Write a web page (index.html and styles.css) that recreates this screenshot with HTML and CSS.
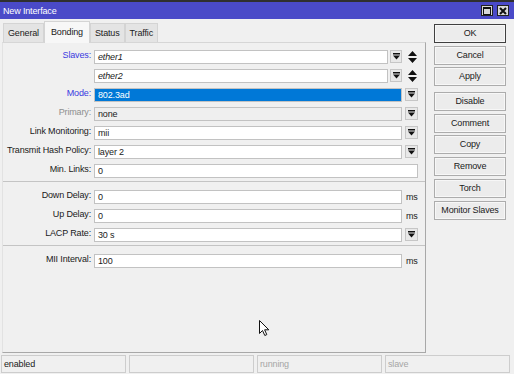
FILE: index.html
```html
<!DOCTYPE html>
<html lang="en">
<head>
<meta charset="UTF-8">
<meta name="viewport" content="width=device-width, initial-scale=1.0">
<link rel="stylesheet" href="styles.css">
<title>New Interface</title>
</head>
<body>

<div class="window">
  <div class="titlebar">
    <span class="title">New Interface</span>
    <div class="winbtns">
      <span class="winbtn">
        <svg width="8" height="8" viewBox="0 0 8 8"><rect x="0.5" y="0.5" width="7" height="7" fill="none" stroke="#111" stroke-width="1"/><rect x="0" y="0" width="8" height="2" fill="#111"/></svg>
      </span>
      <span class="winbtn">
        <svg width="8" height="8" viewBox="0 0 8 8"><path d="M1 1 L7 7 M7 1 L1 7" stroke="#111" stroke-width="2"/></svg>
      </span>
    </div>
  </div>

  <div class="content">
    <div class="main">
      <div class="tabs">
        <div class="tab">General</div>
        <div class="tab active">Bonding</div>
        <div class="tab">Status</div>
        <div class="tab">Traffic</div>
      </div>

      <div class="panel">
        <div class="row">
          <div class="label blue">Slaves:</div>
          <div class="field">
            <div class="input italic">ether1</div>
            <span class="drop narrow"><svg width="7" height="7" viewBox="0 0 7 7"><rect x="0" y="0" width="7" height="1.5" fill="#111"/><path d="M0 2.5 H7 L3.5 6.5 Z" fill="#111"/></svg></span>
            <span class="updown"><svg width="9" height="12" viewBox="0 0 9 12"><path d="M4.5 0 L9 5 H0 Z M0 7 H9 L4.5 12 Z" fill="#111"/></svg></span>
          </div>
        </div>
        <div class="row">
          <div class="label"></div>
          <div class="field">
            <div class="input italic">ether2</div>
            <span class="drop narrow"><svg width="7" height="7" viewBox="0 0 7 7"><rect x="0" y="0" width="7" height="1.5" fill="#111"/><path d="M0 2.5 H7 L3.5 6.5 Z" fill="#111"/></svg></span>
            <span class="updown"><svg width="9" height="12" viewBox="0 0 9 12"><path d="M4.5 0 L9 5 H0 Z M0 7 H9 L4.5 12 Z" fill="#111"/></svg></span>
          </div>
        </div>
        <div class="row">
          <div class="label blue">Mode:</div>
          <div class="field">
            <div class="input selected">802.3ad</div>
            <span class="drop"><svg width="7" height="7" viewBox="0 0 7 7"><rect x="0" y="0" width="7" height="1.5" fill="#111"/><path d="M0 2.5 H7 L3.5 6.5 Z" fill="#111"/></svg></span>
          </div>
        </div>
        <div class="row">
          <div class="label grey">Primary:</div>
          <div class="field">
            <div class="input disabled">none</div>
            <span class="drop"><svg width="7" height="7" viewBox="0 0 7 7"><rect x="0" y="0" width="7" height="1.5" fill="#111"/><path d="M0 2.5 H7 L3.5 6.5 Z" fill="#111"/></svg></span>
          </div>
        </div>
        <div class="row">
          <div class="label">Link Monitoring:</div>
          <div class="field">
            <div class="input">mii</div>
            <span class="drop"><svg width="7" height="7" viewBox="0 0 7 7"><rect x="0" y="0" width="7" height="1.5" fill="#111"/><path d="M0 2.5 H7 L3.5 6.5 Z" fill="#111"/></svg></span>
          </div>
        </div>
        <div class="row">
          <div class="label">Transmit Hash Policy:</div>
          <div class="field">
            <div class="input">layer 2</div>
            <span class="drop"><svg width="7" height="7" viewBox="0 0 7 7"><rect x="0" y="0" width="7" height="1.5" fill="#111"/><path d="M0 2.5 H7 L3.5 6.5 Z" fill="#111"/></svg></span>
          </div>
        </div>
        <div class="row">
          <div class="label">Min. Links:</div>
          <div class="field">
            <div class="input">0</div>
          </div>
        </div>

        <div class="separator"></div>

        <div class="row">
          <div class="label">Down Delay:</div>
          <div class="field">
            <div class="input">0</div>
            <span class="unit">ms</span>
          </div>
        </div>
        <div class="row">
          <div class="label">Up Delay:</div>
          <div class="field">
            <div class="input">0</div>
            <span class="unit">ms</span>
          </div>
        </div>
        <div class="row">
          <div class="label">LACP Rate:</div>
          <div class="field">
            <div class="input">30 s</div>
            <span class="drop"><svg width="7" height="7" viewBox="0 0 7 7"><rect x="0" y="0" width="7" height="1.5" fill="#111"/><path d="M0 2.5 H7 L3.5 6.5 Z" fill="#111"/></svg></span>
          </div>
        </div>

        <div class="separator"></div>

        <div class="row">
          <div class="label">MII Interval:</div>
          <div class="field">
            <div class="input">100</div>
            <span class="unit">ms</span>
          </div>
        </div>
      </div>
    </div>

    <div class="side">
      <div class="btn default">OK</div>
      <div class="btn">Cancel</div>
      <div class="btn">Apply</div>
      <div class="btn spaced">Disable</div>
      <div class="btn">Comment</div>
      <div class="btn">Copy</div>
      <div class="btn">Remove</div>
      <div class="btn">Torch</div>
      <div class="btn">Monitor Slaves</div>
    </div>
  </div>

  <div class="statusbar">
    <div class="status">enabled</div>
    <div class="status"></div>
    <div class="status dim">running</div>
    <div class="status dim">slave</div>
  </div>

  <svg class="cursor" width="11" height="17" viewBox="0 0 11 17">
    <path d="M0.5 0.5 V13.5 L3.5 10.5 L5.8 15.5 L7.8 14.6 L5.6 9.8 H9.8 Z" fill="#fff" stroke="#111" stroke-width="1"/>
  </svg>
</div>

</body>
</html>
```

FILE: styles.css
```css
body {
  margin: 0;
  background-color: #f0f0f0;
  font-family: "Liberation Sans", Arial, sans-serif;
  font-size: 9px;
  letter-spacing: -0.15px;
  color: #1a1a1a;
}
.window {
  position: relative;
  width: 514px;
  height: 374px;
  box-sizing: border-box;
  display: flex;
  flex-direction: column;
  background-color: #f0f0f0;
  border-top: 2px solid #2f2f2f;
}
.titlebar {
  height: 17px;
  display: flex;
  align-items: center;
  justify-content: space-between;
  padding: 0 5px 0 3px;
  background-color: #4a4ac8;
  color: #fff;
}
.winbtns {
  display: flex;
  gap: 4px;
}
.winbtn {
  width: 12px;
  height: 11px;
  box-sizing: border-box;
  display: flex;
  align-items: center;
  justify-content: center;
  background-color: #d9d9d9;
  border: 1px solid #222;
}
.content {
  height: 334px;
  display: flex;
}
.main {
  width: 424px;
  margin-left: 2px;
  display: flex;
  flex-direction: column;
}
.tabs {
  height: 23px;
  display: flex;
  align-items: flex-end;
  padding-left: 1px;
}
.tab {
  height: 19px;
  box-sizing: border-box;
  display: flex;
  align-items: center;
  padding: 0 4px;
  background-color: #e4e4e4;
  border: 1px solid #d4d4d4;
  border-bottom: none;
}
.tab.active {
  height: 22px;
  padding: 0 6px 2px;
  background-color: #f7f7f7;
  margin-bottom: -1px;
  position: relative;
  z-index: 1;
}
.panel {
  flex: 1;
  padding: 3px 7px 0 0;
  border: 1px solid #a8a8a8;
  border-top-color: #d6d6d6;
  border-left-color: #e2e2e2;
}
.row {
  height: 19px;
  box-sizing: border-box;
  padding-top: 2px;
  display: flex;
}
.label {
  width: 88px;
  margin-right: 3px;
  text-align: right;
  line-height: 14px;
  white-space: nowrap;
}
.label.blue {
  color: #3a3ae0;
}
.label.grey {
  color: #8e8e8e;
}
.field {
  width: 324px;
  display: flex;
  align-items: center;
}
.input {
  flex: 1;
  height: 14px;
  box-sizing: border-box;
  padding: 0 3px;
  line-height: 12px;
  background-color: #fff;
  border: 1px solid #c2c2c2;
}
.input.italic {
  font-style: italic;
}
.input.selected {
  background-color: #0078d7;
  color: #fff;
}
.input.disabled {
  background-color: #efefef;
}
.drop {
  width: 13px;
  height: 13px;
  box-sizing: border-box;
  margin-left: 3px;
  display: flex;
  align-items: center;
  justify-content: center;
  background-color: #e8e8e8;
  border: 1px solid #c6c6c6;
}
.drop.narrow {
  width: 12px;
  margin-left: 2px;
}
.updown {
  width: 9px;
  margin: 0 1px 0 6px;
  display: flex;
}
.unit {
  width: 12px;
  margin-left: 3px;
  padding-left: 1px;
}
.separator {
  margin: 2px 0 4px;
  margin-right: -7px;
  border-top: 1px solid #c4c4c4;
}
.side {
  width: 72px;
  margin-left: 8px;
  padding-top: 5px;
  display: flex;
  flex-direction: column;
  gap: 2.7px;
}
.btn {
  height: 19px;
  box-sizing: border-box;
  line-height: 17px;
  text-align: center;
  background-color: #ececec;
  border: 1px solid #acacac;
  box-shadow: inset 0 0 0 1px #f7f7f7;
}
.btn.default {
  border-color: #3f3f3f;
}
.btn.spaced {
  margin-top: 3px;
}
.statusbar {
  height: 21px;
  box-sizing: border-box;
  padding: 2px 4px 1px 1px;
  display: grid;
  grid-template-columns: repeat(4, 1fr);
  gap: 3px;
}
.status {
  border: 1px solid #cdcdcd;
  padding-left: 2px;
  line-height: 16px;
}
.status.dim {
  color: #a6a6a6;
}
.cursor {
  position: absolute;
  left: 259px;
  top: 318px;
}
```
